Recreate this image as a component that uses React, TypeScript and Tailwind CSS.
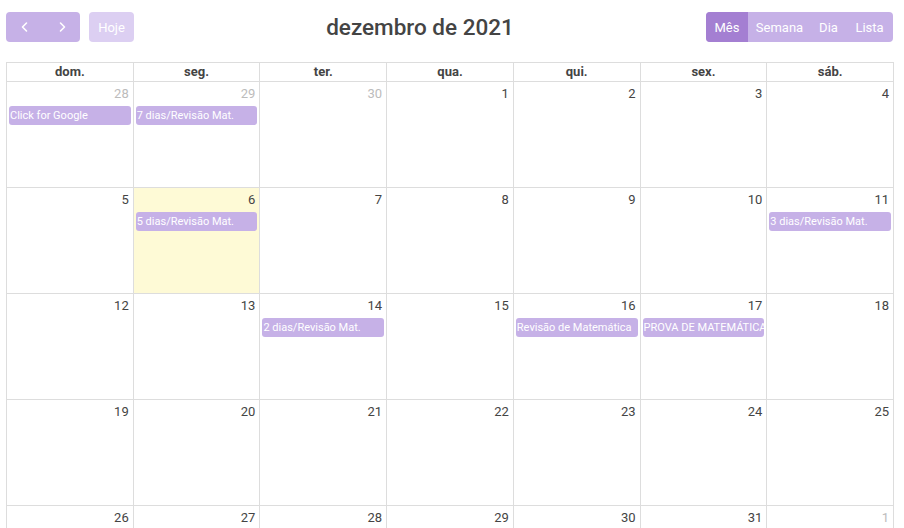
import React from "react";

type Day = { n: number; other?: boolean; today?: boolean; event?: string };

const heads = ["dom.", "seg.", "ter.", "qua.", "qui.", "sex.", "sáb."];

const days: Day[] = [
  { n: 28, other: true, event: "Click for Google" },
  { n: 29, other: true, event: "7 dias/Revisão Mat." },
  { n: 30, other: true },
  { n: 1 },
  { n: 2 },
  { n: 3 },
  { n: 4 },
  { n: 5 },
  { n: 6, today: true, event: "5 dias/Revisão Mat." },
  { n: 7 },
  { n: 8 },
  { n: 9 },
  { n: 10 },
  { n: 11, event: "3 dias/Revisão Mat." },
  { n: 12 },
  { n: 13 },
  { n: 14, event: "2 dias/Revisão Mat." },
  { n: 15 },
  { n: 16, event: "Revisão de Matemática" },
  { n: 17, event: "PROVA DE MATEMÁTICA" },
  { n: 18 },
  { n: 19 },
  { n: 20 },
  { n: 21 },
  { n: 22 },
  { n: 23 },
  { n: 24 },
  { n: 25 },
  { n: 26 },
  { n: 27 },
  { n: 28 },
  { n: 29 },
  { n: 30 },
  { n: 31 },
  { n: 1, other: true },
];

function Chevron({ dir }: { dir: "left" | "right" }) {
  return (
    <svg width="14" height="14" viewBox="0 0 14 14" fill="none" stroke="white" strokeWidth="1.6" strokeLinecap="round" strokeLinejoin="round">
      {dir === "left" ? <path d="M8.5 3 L4.5 7 L8.5 11" /> : <path d="M5.5 3 L9.5 7 L5.5 11" />}
    </svg>
  );
}

export default function App() {
  return (
    <div className="w-[904px] h-[528px] overflow-hidden bg-white font-['Roboto',sans-serif] text-[#444]">
      {/* toolbar */}
      <div className="flex items-center justify-between pl-[6px] pr-[11px] pt-[12px]">
        <div className="flex items-center gap-[9px]">
          <div className="flex h-[30px] rounded-[4px] overflow-hidden bg-[#c6b1e7]">
            <button className="w-[37px] h-full flex items-center justify-center">
              <Chevron dir="left" />
            </button>
            <button className="w-[37px] h-full flex items-center justify-center">
              <Chevron dir="right" />
            </button>
          </div>
          <button className="h-[30px] w-[45px] rounded-[4px] bg-[#dccff2] text-white text-[13px] leading-[31px]">Hoje</button>
        </div>
        <h2 className="text-[22.5px] font-medium text-[#444] leading-[30px]">dezembro de 2021</h2>
        <div className="flex h-[30px] rounded-[4px] overflow-hidden bg-[#c6b1e7] text-white text-[13px] leading-[31px]">
          <button className="w-[42px] h-full bg-[#a47fd2]">Mês</button>
          <button className="w-[63px] h-full">Semana</button>
          <button className="w-[35px] h-full">Dia</button>
          <button className="w-[47px] h-full">Lista</button>
        </div>
      </div>

      {/* calendar */}
      <div className="ml-[6px] mt-[20px] w-[888px] border-l border-t border-[#ddd]">
        <div className="grid grid-cols-7">
          {heads.map((h) => (
            <div key={h} className="h-[19px] border-r border-b border-[#ddd] text-center text-[13px] font-bold leading-[18px] text-[#444]">
              {h}
            </div>
          ))}
          {days.map((d, i) => (
            <div
              key={i}
              className={`h-[106px] border-r border-b border-[#ddd] ${d.today ? "bg-[#fefad6]" : "bg-white"}`}
            >
              <div className={`h-[24px] pr-[4px] pt-[3px] text-right text-[13px] leading-[17px] ${d.other ? "text-[#bcbcbc]" : "text-[#444]"}`}>
                {d.n}
              </div>
              {d.event && (
                <div className="mx-[2px] h-[19px] rounded-[3px] bg-[#c6b1e7] pl-[1px] text-[11px] leading-[19px] text-white whitespace-nowrap overflow-hidden">
                  {d.event}
                </div>
              )}
            </div>
          ))}
        </div>
      </div>
    </div>
  );
}
